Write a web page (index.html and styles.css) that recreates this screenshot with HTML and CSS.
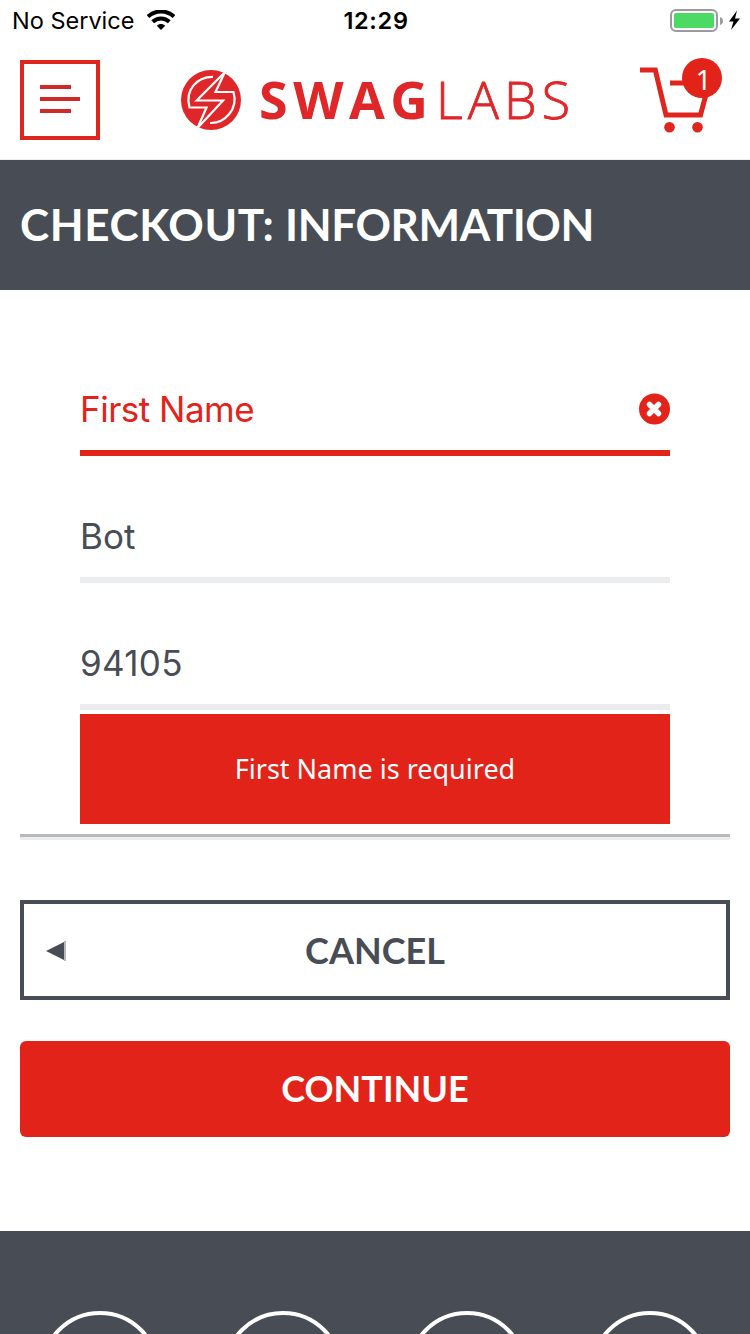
FILE: index.html
```html
<!DOCTYPE html>
<html lang="en">
<head>
<meta charset="utf-8">
<title>Swag Labs</title>
<link rel="stylesheet" href="styles.css">
</head>
<body>
<div class="screen">
  <div class="status">
    <div class="carrier"><span class="carrier-name">No Service</span>
      <svg class="wifi" width="28" height="20" viewBox="0 0 28 20"><g fill="none" stroke="#000"><path d="M1 6.6C8.500-.3 19.500-.3 27 6.600" stroke-width="4"/><path d="M5.700 11.800C10.500 7.300 17.500 7.300 22.300 11.800" stroke-width="4"/></g><path d="M14 20L9.800 15.700C12.200 13.500 15.800 13.500 18.200 15.700Z"/></svg>
    </div>
    <span class="clock">12:29</span>
    <div class="power">
      <svg width="70" height="24" viewBox="0 0 70 24"><rect x="1" y="1" width="46" height="21" rx="5" fill="#fff" stroke="#9b9a9e" stroke-width="2"/><rect x="4" y="4" width="40" height="15" rx="2" fill="#4cd964"/><path d="M50 8Q53 9 53 12Q53 15 50 16Z" fill="#9b9a9e"/><path d="M67 1.500L59 12.500H63.500L61 21L70 9.500H65Z"/></svg>
    </div>
  </div>
  <header class="header">
    <button class="menu" aria-label="Menu"><i class="bar short"></i><i class="bar"></i><i class="bar short"></i></button>
    <svg class="logo" width="392" height="62" viewBox="0 0 392 62">
      <circle cx="31" cy="31" r="30" fill="#df2628"/>
      <g fill="none" stroke="#fff" stroke-width="2.200">
        <path d="M33 7.800C18 7.500 4.500 20 9.500 38.500H26.500L17.500 59"/>
        <path d="M45 3L16.700 31.500H43L17.500 59"/>
        <path d="M45 3L35.500 23H53.500C58.500 40 45 54.500 30 54"/>
      </g>
      <g fill="#df2628"><text class="swag" x="79" y="49.500" textLength="169">SWAG</text><text class="labs" x="256" y="49.500" textLength="134">LABS</text></g>
    </svg>
    <div class="cart">
      <svg width="84" height="80" viewBox="0 0 84 80"><path d="M2 15H17.300L28 60H62.500L71 28H32" fill="none" stroke="#df251d" stroke-width="5"/><circle cx="31.500" cy="72.300" r="5.300" fill="#df251d"/><circle cx="59.500" cy="72.300" r="5.300" fill="#df251d"/></svg>
      <span class="badge">1</span>
    </div>
  </header>
  <div class="title"><h1 class="title-text"><span class="title-step">CHECKOUT:</span> <span class="title-page">INFORMATION</span></h1></div>
  <main class="main">
    <form class="form">
      <div class="field invalid"><span class="value name">First Name</span>
        <svg width="32" height="32" viewBox="0 0 32 32"><circle cx="16.500" cy="16" r="15.500" fill="#e2231a"/><path d="M11.500 11.500L20.500 20.500M20.500 11.500L11.500 20.500" stroke="#fff" stroke-width="5.500" stroke-linecap="round"/></svg>
      </div>
      <div class="field"><span class="value">Bot</span></div>
      <div class="field"><span class="value zip">94105</span></div>
      <div class="error"><span class="error-text">First Name is required</span></div>
    </form>
    <div class="rule"></div>
    <button class="btn cancel"><svg class="arrow" width="22" height="22" viewBox="0 0 22 22"><path d="M1 11L19 2V20Z" fill="#474c55"/><path d="M19 1H21V21H19Z" fill="#b7b9bd"/></svg><span class="cancel-text">CANCEL</span></button>
    <button class="btn continue"><span class="continue-text">CONTINUE</span></button>
  </main>
  <footer class="footer"><i class="social"></i><i class="social"></i><i class="social"></i><i class="social"></i></footer>
</div>
</body>
</html>
```
FILE: styles.css
```css
* { box-sizing: border-box; }
body { margin: 0; background: #fff; }
button { margin: 0; padding: 0; font: inherit; background: none; }
svg { display: block; flex: none; }
.screen { width: 750px; height: 1334px; overflow: hidden; display: flex; flex-direction: column; font-family: Lato, "Open Sans", sans-serif; }
.status { height: 40px; flex: none; display: grid; grid-template-columns: 1fr auto 1fr; padding: 0 10px 0 12px; font: 23.500px/41px Inter, sans-serif; color: #000; }
.carrier { display: flex; gap: 13px; }
.carrier-name { letter-spacing: 0; }
.wifi { margin-top: 10px; }
.clock { font-weight: 600; letter-spacing: 0.700px; }
.power { display: flex; justify-content: flex-end; padding-top: 9px; }
.header { height: 120px; flex: none; display: flex; align-items: flex-start; padding: 20px 20px 0; border-bottom: 1px solid #ededee; }
.menu { width: 80px; height: 80px; border: 4px solid #df251d; display: flex; flex-direction: column; gap: 8px; padding: 21px 16px; }
.bar { width: 40px; height: 4px; background: #cf2a26; }
.short { width: 31px; }
.logo { margin: 9px 0 0 80px; overflow: visible; }
.swag { font: 700 52px "Open Sans", sans-serif; }
.labs { font: 300 52px "Open Sans", sans-serif; stroke: #df2628; stroke-width: 0.800px; }
.cart { position: relative; margin: -5px 0 0 66px; }
.badge { position: absolute; left: 44px; top: 3px; width: 40px; height: 40px; border-radius: 50%; background: #e2231a; color: #fff; font: 28px/42px "Noto Sans", sans-serif; text-align: center; padding-left: 3px; }
.title { height: 130px; flex: none; background: #474c55; display: flex; align-items: center; padding: 0 0 2px 20px; }
.title-text { margin: 0; color: #fff; font: 700 44px/60px Lato, sans-serif; white-space: nowrap; }
.title-step { letter-spacing: 0.600px; }
.title-page { letter-spacing: -0.400px; }
.main { flex: none; height: 941px; padding: 70px 20px 0; display: flex; flex-direction: column; }
.form { padding: 0 60px; }
.field { height: 127px; border-bottom: 6px solid #ebecee; display: flex; align-items: flex-end; justify-content: space-between; padding-bottom: 18px; color: #474c55; }
.field:first-child { height: 96px; }
.value { font: 35px/46px Inter, sans-serif; }
.name { letter-spacing: -0.500px; }
.zip { letter-spacing: 0.300px; }
.invalid { color: #e2231a; border-color: #e2231a; }
.invalid svg { margin-bottom: 7px; }
.error { margin-top: 4px; height: 110px; background: #e2231a; color: #fff; display: flex; align-items: center; justify-content: center; font: 27px/36px "Noto Sans", sans-serif; }
.rule { margin-top: 10px; height: 6px; background: #ebecee; border-top: 3px solid #b8b9bd; flex: none; }
.btn { flex: none; display: flex; align-items: center; justify-content: center; font: 700 36px/44px Lato, sans-serif; }
.cancel { position: relative; margin-top: 60px; height: 100px; border: 4px solid #474c55; color: #474c55; }
.arrow { position: absolute; left: 21px; top: 36px; }
.continue { margin-top: 41px; height: 96px; border: 0; border-radius: 6px; background: #e2231a; color: #fff; padding-bottom: 2px; }
.footer { height: 103px; flex: none; background: #474c55; display: flex; justify-content: space-between; padding: 80px 40px 0; overflow: hidden; }
.social { width: 120px; height: 120px; flex: none; border: 4px solid #fff; border-radius: 50%; }
```
